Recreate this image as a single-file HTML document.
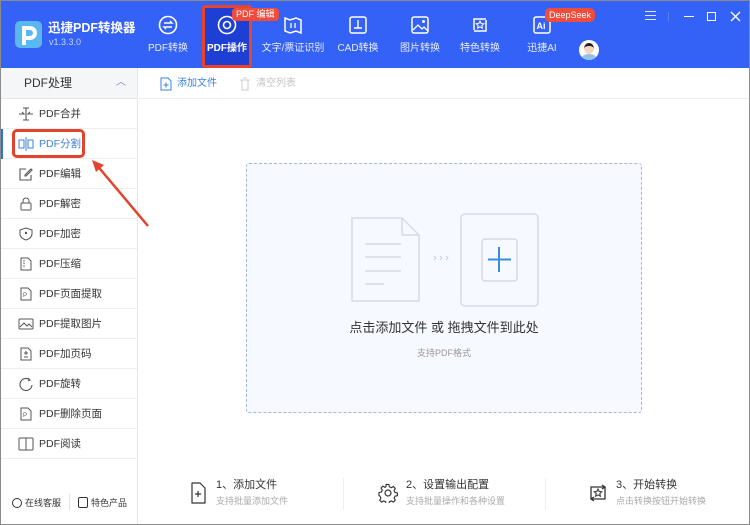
<!DOCTYPE html>
<html><head><meta charset="utf-8"><style>
*{margin:0;padding:0;box-sizing:border-box}
body{width:750px;height:525px;overflow:hidden;font-family:"Liberation Sans","Noto Sans CJK SC",sans-serif;background:#fff;position:relative}
.win{position:absolute;left:0;top:0;width:750px;height:525px;border:1px solid #8a8a8a}
.hdr{position:absolute;left:0;top:0;width:750px;height:68px;background:#3562f6}
.nav{position:absolute;top:0;height:68px;text-align:center;color:#e6ecff;font-size:10px;line-height:12px}
.nav svg{position:absolute;top:14px;left:50%;margin-left:-11px}
.nav span{position:absolute;top:43px;left:-10px;right:-10px;white-space:nowrap}
.side{position:absolute;left:0;top:68px;width:138px;height:456px;border-right:1px solid #e6e6e6;background:#fff}
.row{position:absolute;left:0;width:137px;height:30px;border-bottom:1px solid #eeeeee;font-size:10.5px;color:#333;line-height:30px;padding-left:39px}
.row svg{position:absolute;left:18px;top:8px}
.box{position:absolute;left:246px;top:163px;width:396px;height:250px;border:1px dashed #9cb8e6;background:#f6f9ff;border-radius:3px}
.step{position:absolute;top:478px;font-size:11px;color:#333;line-height:14px}
.step small{display:block;font-size:9px;color:#aaa;margin-top:3px;line-height:12px}
</style></head><body>
<div class="hdr"></div>
<div style="position:absolute;left:15px;top:21px;width:27px;height:27px;border-radius:5px;background:#5ab7f0"></div>
<svg style="position:absolute;left:15px;top:21px" width="27" height="27"><path d="M9 24V7h6a5 5 0 0 1 0 10h-6" stroke="#fff" stroke-width="4" fill="none"/></svg>
<div style="position:absolute;left:48px;top:21px;color:#fff;font-size:12.5px;font-weight:bold;line-height:15px">迅捷PDF转换器</div>
<div style="position:absolute;left:49px;top:37px;color:#c7d4ff;font-size:9px;line-height:10px">v1.3.3.0</div>
<div class="nav" style="left:143px;width:50px"><svg width="22" height="22"><circle cx="11" cy="11" r="8.5" stroke="#fff" stroke-width="1.6" fill="none"/><path d="M7 9h8l-2-2M15 13H7l2 2" stroke="#fff" stroke-width="1.4" fill="none"/></svg><span>PDF转换</span></div>
<div style="position:absolute;left:202px;top:5px;width:50px;height:63px;background:#1e3fd4;border:3px solid #e8442c;border-radius:3px"></div>
<div class="nav" style="left:202px;width:50px;color:#fff;font-weight:bold"><svg width="22" height="22"><circle cx="11" cy="11" r="8.5" stroke="#fff" stroke-width="1.6" fill="none"/><circle cx="11" cy="11" r="3.5" stroke="#fff" stroke-width="1.6" fill="none"/></svg><span>PDF操作</span></div>
<div style="position:absolute;left:232px;top:8px;background:#ef4c3c;color:#fff;font-size:9px;padding:0 4px;border-radius:4px;line-height:13px">PDF 编辑</div>
<div class="nav" style="left:260px;width:66px"><svg width="22" height="22"><path d="M3 4l5 2 6-2 5 2v13l-5-2-6 2-5-2z" stroke="#fff" stroke-width="1.5" fill="none"/><path d="M9 9v5M13 9v5" stroke="#fff" stroke-width="1.3"/></svg><span>文字/票证识别</span></div>
<div class="nav" style="left:333px;width:50px"><svg width="22" height="22"><rect x="3" y="3" width="16" height="16" rx="2" stroke="#fff" stroke-width="1.5" fill="none"/><path d="M11 6v8M7 14h8" stroke="#fff" stroke-width="1.4"/></svg><span>CAD转换</span></div>
<div class="nav" style="left:395px;width:50px"><svg width="22" height="22"><rect x="3" y="3" width="16" height="16" rx="2" stroke="#fff" stroke-width="1.5" fill="none"/><path d="M4 16l5-5 4 4 2-2 4 4" stroke="#fff" stroke-width="1.3" fill="none"/><circle cx="14.5" cy="7.5" r="1.5" fill="#fff"/></svg><span>图片转换</span></div>
<div class="nav" style="left:455px;width:50px"><svg width="22" height="22"><path d="M5 16V5h12M17 6v11H5" stroke="#fff" stroke-width="1.5" fill="none"/><path d="M11 7l1.2 2.5 2.6.3-2 1.8.6 2.6-2.4-1.4-2.4 1.4.6-2.6-2-1.8 2.6-.3z" stroke="#fff" stroke-width="1" fill="none"/></svg><span>特色转换</span></div>
<div class="nav" style="left:517px;width:50px"><svg width="22" height="22"><rect x="3" y="3" width="16" height="16" rx="2" stroke="#fff" stroke-width="1.5" fill="none"/><text x="5.5" y="15" font-size="9" font-weight="bold" fill="#fff" font-family="Liberation Sans">Ai</text></svg><span>迅捷AI</span></div>
<div style="position:absolute;left:545px;top:8px;background:#ef4c3c;color:#fff;font-size:9px;padding:0 4px;border-radius:5px;line-height:14px">DeepSeek</div>
<div style="position:absolute;left:579px;top:40px;width:20px;height:20px;border-radius:50%;background:#fff;overflow:hidden"><div style="position:absolute;left:5px;top:3px;width:10px;height:11px;border-radius:50%;background:#f4d6c0;border-top:3px solid #222"></div><div style="position:absolute;left:3px;top:14px;width:14px;height:8px;border-radius:50%;background:#8fc4e8"></div></div>
<div style="position:absolute;left:645px;top:11px;width:11px;height:1.3px;background:#dfe6ff;box-shadow:0 4px 0 #dfe6ff,0 8px 0 #dfe6ff"></div>
<div style="position:absolute;left:668px;top:12px;width:1px;height:10px;background:#5a7ef8"></div>
<div style="position:absolute;left:684px;top:16px;width:10px;height:1.3px;background:#fff"></div>
<div style="position:absolute;left:707px;top:12px;width:9px;height:9px;border:1.3px solid #fff"></div>
<svg style="position:absolute;left:730px;top:11px" width="11" height="11"><path d="M1 1l9 9M10 1l-9 9" stroke="#fff" stroke-width="1.3"/></svg>
<div class="side">
<div style="position:absolute;left:0;top:0;width:137px;height:31px;background:#f5f6f8;border-bottom:1px solid #e6e6e6;font-size:12px;color:#333;line-height:31px;padding-left:24px">PDF处理<span style="position:absolute;left:116px;top:-1px;color:#6b86c8;font-size:10px">︿</span></div>
</div>
<div class="row" style="top:99px"><svg width="16" height="14"><path d="M8 1v12M5 1h6M5 13h6M1 7h5l-2-2M15 7h-5l2-2" stroke="#555" stroke-width="1.1" fill="none"/></svg>PDF合并</div>
<div class="row" style="top:129px;color:#3b82e0"><svg width="16" height="14"><rect x="1" y="3" width="5" height="8" stroke="#3b82e0" fill="none"/><rect x="10" y="3" width="5" height="8" stroke="#3b82e0" fill="none"/><path d="M8 0v14" stroke="#3b82e0"/></svg>PDF分割</div>
<div style="position:absolute;left:0;top:129px;width:3px;height:30px;background:#2d6fe0"></div>
<div style="position:absolute;left:12px;top:129px;width:73px;height:29px;border:3px solid #e2432c;border-radius:5px"></div>
<div class="row" style="top:159px"><svg width="16" height="14"><path d="M8 2H2v11h11V8M7 8l6-6 1 1-6 6H7z" stroke="#555" stroke-width="1.1" fill="none"/></svg>PDF编辑</div>
<div class="row" style="top:189px"><svg width="16" height="14"><rect x="3" y="6" width="10" height="7" rx="1" stroke="#555" fill="none"/><path d="M5 6V4a3 3 0 0 1 6 0v2" stroke="#555" fill="none"/></svg>PDF解密</div>
<div class="row" style="top:219px"><svg width="16" height="14"><path d="M8 1l6 2v4c0 3-3 5-6 6-3-1-6-3-6-6V3z" stroke="#555" fill="none"/><circle cx="8" cy="6" r="1.2" fill="#555"/></svg>PDF加密</div>
<div class="row" style="top:249px"><svg width="16" height="14"><path d="M3 1h7l3 3v9H3z" stroke="#555" fill="none"/><path d="M6 3v8" stroke="#555" stroke-dasharray="1.5 1"/></svg>PDF压缩</div>
<div class="row" style="top:279px"><svg width="16" height="14"><path d="M3 1h7l3 3v9H3z" stroke="#555" fill="none"/><text x="5" y="10" font-size="6" fill="#555">P</text></svg>PDF页面提取</div>
<div class="row" style="top:309px"><svg width="16" height="14"><rect x="1" y="2" width="14" height="10" rx="1" stroke="#555" fill="none"/><path d="M2 10l4-4 3 3 2-2 3 3" stroke="#555" fill="none"/></svg>PDF提取图片</div>
<div class="row" style="top:339px"><svg width="16" height="14"><path d="M3 1h7l3 3v9H3z" stroke="#555" fill="none"/><path d="M6 6h4M8 4v4M6 10h4" stroke="#555"/></svg>PDF加页码</div>
<div class="row" style="top:369px"><svg width="16" height="14"><path d="M12 3A6 6 0 1 0 14 8" stroke="#555" stroke-width="1.1" fill="none"/><path d="M10 1l2 2-2 1" stroke="#555" fill="none"/></svg>PDF旋转</div>
<div class="row" style="top:399px"><svg width="16" height="14"><path d="M3 1h7l3 3v9H3z" stroke="#555" fill="none"/><text x="5" y="10" font-size="6" fill="#555">P</text></svg>PDF删除页面</div>
<div class="row" style="top:429px"><svg width="16" height="14"><rect x="1" y="1" width="14" height="12" rx="1" stroke="#555" fill="none"/><path d="M8 1v12" stroke="#555"/></svg>PDF阅读</div>
<div style="position:absolute;left:12px;top:497px;font-size:9px;color:#333;line-height:12px"><span style="display:inline-block;width:10px;height:10px;border:1px solid #333;border-radius:50%;vertical-align:-2px;margin-right:3px"></span>在线客服</div>
<div style="position:absolute;left:69px;top:494px;width:1px;height:16px;background:#e3e3e3"></div>
<div style="position:absolute;left:78px;top:497px;font-size:9px;color:#333;line-height:12px"><span style="display:inline-block;width:10px;height:11px;border:1px solid #333;border-radius:2px;vertical-align:-2px;margin-right:3px"></span>特色产品</div>
<svg style="position:absolute;left:0;top:0" width="750" height="525"><path d="M148 226L95 163" stroke="#e2432c" stroke-width="2.5"/><path d="M92 160l12 5-8 7z" fill="#e2432c"/></svg>
<div style="position:absolute;left:139px;top:68px;width:610px;height:31px;border-bottom:1px solid #ececec"></div>
<svg style="position:absolute;left:160px;top:77px" width="12" height="14"><path d="M1 1h7l3 3v9H1z" stroke="#3b82e0" fill="none"/><path d="M3.5 8h5M6 5.5v5" stroke="#3b82e0"/></svg>
<div style="position:absolute;left:177px;top:78px;font-size:10px;color:#3b82e0;line-height:12px">添加文件</div>
<svg style="position:absolute;left:239px;top:77px" width="12" height="14"><path d="M1 3h10M3 3v10h6V3M4 1h4" stroke="#ccc" fill="none"/></svg>
<div style="position:absolute;left:256px;top:78px;font-size:10px;color:#c4c4c4;line-height:12px">清空列表</div>
<div class="box"></div>
<svg style="position:absolute;left:346px;top:210px" width="200" height="100"><path d="M6 8h50l17 17v66H6z" stroke="#d8dbe2" stroke-width="1.5" fill="#f6f9ff"/><path d="M56 8v17h17" stroke="#d8dbe2" stroke-width="1.5" fill="none"/><path d="M19 34h36M19 47h36M19 61h36M19 74h19" stroke="#d8dbe2" stroke-width="1.5"/><path d="M88 46l2 2-2 2M94 46l2 2-2 2M100 46l2 2-2 2" stroke="#b9d3ee" fill="none"/><rect x="115" y="4" width="77" height="92" rx="4" stroke="#d8dbe2" stroke-width="1.5" fill="#f6f9ff"/><rect x="136" y="29" width="35" height="42" rx="3" stroke="#d8dbe2" stroke-width="1.5" fill="#f6f9ff"/><path d="M153 37v25M142 49.5h23" stroke="#3b8be0" stroke-width="2"/></svg>
<div style="position:absolute;left:246px;top:320px;width:396px;text-align:center;font-size:13px;color:#333;line-height:16px">点击添加文件 或 拖拽文件到此处</div>
<div style="position:absolute;left:246px;top:347px;width:396px;text-align:center;font-size:9px;color:#999;line-height:12px">支持PDF格式</div>
<svg style="position:absolute;left:190px;top:482px" width="16" height="22"><path d="M2 1h8l5 5v15H2z" stroke="#333" stroke-width="1.2" fill="none" stroke-linejoin="round"/><path d="M5 12h6M8 9v6" stroke="#333" stroke-width="1.2"/></svg>
<div class="step" style="left:216px">1、添加文件<small>支持批量添加文件</small></div>
<div style="position:absolute;left:343px;top:478px;width:1px;height:32px;background:#eee"></div>
<svg style="position:absolute;left:378px;top:483px" width="20" height="20"><circle cx="10" cy="10" r="3" stroke="#333" stroke-width="1.2" fill="none"/><path d="M8.5 1.5h3l.5 2.5 2 1 2.2-1.3 2 2-1.3 2.2 1 2 2.5.5v3l-2.5.5-1 2 1.3 2.2-2 2-2.2-1.3-2 1-.5 2.5h-3l-.5-2.5-2-1-2.2 1.3-2-2 1.3-2.2-1-2L1 13v-3l2.5-.5 1-2L3.2 5.3l2-2L7.5 4.6l1-1z" transform="scale(.95)" stroke="#333" stroke-width="1.2" fill="none" stroke-linejoin="round"/></svg>
<div class="step" style="left:406px">2、设置输出配置<small>支持批量操作和各种设置</small></div>
<div style="position:absolute;left:545px;top:478px;width:1px;height:32px;background:#eee"></div>
<svg style="position:absolute;left:588px;top:483px" width="20" height="20"><path d="M3 16V4h14M17 4v12H3" stroke="#333" stroke-width="1.3" fill="none"/><path d="M14 2l3 2-3 2M6 14l-3 2 3 2" stroke="#333" stroke-width="1.2" fill="none"/><path d="M10 6l1.2 2.5 2.6.3-2 1.8.6 2.6-2.4-1.4-2.4 1.4.6-2.6-2-1.8 2.6-.3z" stroke="#333" stroke-width="1" fill="none"/></svg>
<div class="step" style="left:616px">3、开始转换<small>点击转换按钮开始转换</small></div>
<div class="win"></div>
</body></html>
